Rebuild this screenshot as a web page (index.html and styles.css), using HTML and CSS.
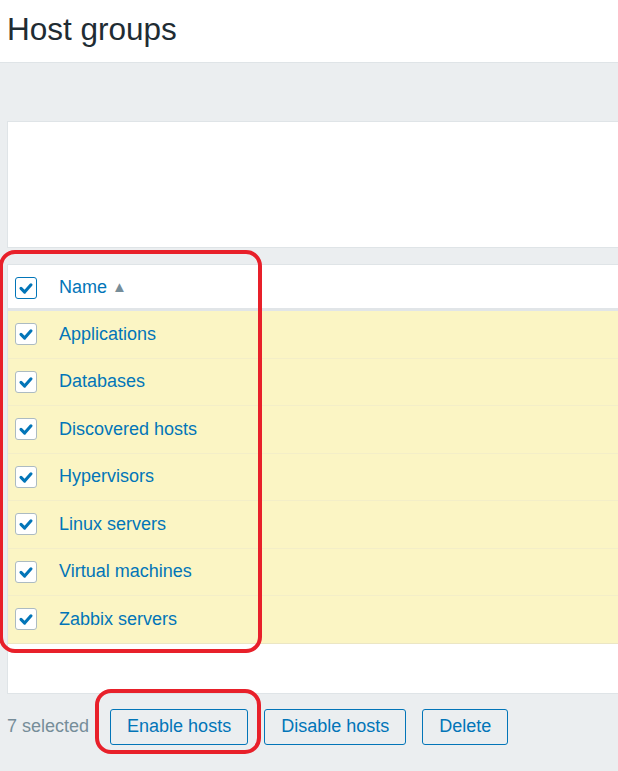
FILE: index.html
```html
<!DOCTYPE html>
<html>
<head>
<meta charset="utf-8">
<link rel="stylesheet" href="styles.css">
</head>
<body>
<header class="page-header">
  <h1 class="title">Host groups</h1>
</header>
<main class="content">
  <div class="filter-box"></div>
  <div class="list-box">
    <div class="row head">
      <span class="cb cb-head"><svg viewBox="0 0 22 22"><path d="M5.5 11.5 L9.5 15.5 L16.5 7.5" /></svg></span>
      <span class="name">Name <span class="arrow">▲</span></span>
    </div>
    <div class="row sel"><span class="cb"><svg viewBox="0 0 22 22"><path d="M5.5 11.5 L9.5 15.5 L16.5 7.5" /></svg></span><span class="name">Applications</span></div>
    <div class="row sel"><span class="cb"><svg viewBox="0 0 22 22"><path d="M5.5 11.5 L9.5 15.5 L16.5 7.5" /></svg></span><span class="name">Databases</span></div>
    <div class="row sel"><span class="cb"><svg viewBox="0 0 22 22"><path d="M5.5 11.5 L9.5 15.5 L16.5 7.5" /></svg></span><span class="name">Discovered hosts</span></div>
    <div class="row sel"><span class="cb"><svg viewBox="0 0 22 22"><path d="M5.5 11.5 L9.5 15.5 L16.5 7.5" /></svg></span><span class="name">Hypervisors</span></div>
    <div class="row sel"><span class="cb"><svg viewBox="0 0 22 22"><path d="M5.5 11.5 L9.5 15.5 L16.5 7.5" /></svg></span><span class="name">Linux servers</span></div>
    <div class="row sel"><span class="cb"><svg viewBox="0 0 22 22"><path d="M5.5 11.5 L9.5 15.5 L16.5 7.5" /></svg></span><span class="name">Virtual machines</span></div>
    <div class="row sel last"><span class="cb"><svg viewBox="0 0 22 22"><path d="M5.5 11.5 L9.5 15.5 L16.5 7.5" /></svg></span><span class="name">Zabbix servers</span></div>
    <div class="list-space"></div>
  </div>
  <div class="actions">
    <span class="count">7 selected</span>
    <button class="btn">Enable hosts</button>
    <button class="btn">Disable hosts</button>
    <button class="btn">Delete</button>
  </div>
</main>
<div class="mark mark-list"></div>
<div class="mark mark-btn"></div>
</body>
</html>
```

FILE: styles.css
```css
html, body {
  margin: 0;
  padding: 0;
}
body {
  width: 618px;
  height: 771px;
  overflow: hidden;
  position: relative;
  background: #ebeef0;
  font-family: "Liberation Sans", Arial, sans-serif;
}
.page-header {
  background: #ffffff;
  height: 62px;
  border-bottom: 1px solid #dfe4e7;
  display: flex;
  align-items: center;
  padding-left: 7px;
}
.title {
  margin: 0;
  font-weight: normal;
  font-size: 31.5px;
  color: #1f2c33;
  line-height: 1;
  position: relative;
  top: -1px;
}
.content {
  padding: 58px 0 0 7px;
}
.filter-box {
  height: 125px;
  background: #ffffff;
  border: 1px solid #dfe4e7;
  border-right: none;
}
.list-box {
  margin-top: 16px;
  background: #ffffff;
  border: 1px solid #dfe4e7;
  border-right: none;
}
.row {
  display: flex;
  align-items: center;
  height: 47px;
  padding-left: 7px;
  border-bottom: 1px solid #f3eec8;
  box-sizing: border-box;
}
.row.head {
  height: 46px;
  border-bottom: 3px solid #e1e5e8;
  padding-top: 2px;
}
.row.sel {
  background: #fbf5c4;
  height: 47.5px;
}
.row.last {
  border-bottom: 1px solid #ebe6c4;
}
.cb {
  width: 22px;
  height: 22px;
  box-sizing: border-box;
  border: 1px solid #acbbc2;
  border-radius: 3px;
  background: #ffffff;
  display: inline-flex;
  flex: none;
}
.cb-head {
  border-color: #0275b8;
}
.cb svg {
  width: 20px;
  height: 20px;
}
.cb path {
  fill: none;
  stroke: #0275b8;
  stroke-width: 3.4;
  stroke-linecap: round;
  stroke-linejoin: round;
}
.name {
  margin-left: 22px;
  font-size: 18px;
  color: #0275b8;
}
.arrow {
  color: #768d99;
  font-size: 15px;
  position: relative;
  top: -1px;
}
.list-space {
  height: 49px;
}
.actions {
  display: flex;
  align-items: center;
  height: 36px;
  margin-top: 15px;
}
.count {
  font-size: 18px;
  color: #768d99;
  margin-right: 21px;
}
.btn {
  height: 36px;
  box-sizing: border-box;
  border: 1px solid #0275b8;
  border-radius: 3px;
  background: transparent;
  color: #0275b8;
  font-family: "Liberation Sans", Arial, sans-serif;
  font-size: 18px;
  padding: 0 16px;
  margin-right: 16px;
}
.mark {
  position: absolute;
  border: 4px solid #e8202a;
  border-radius: 16px;
  box-sizing: border-box;
}
.mark-list {
  left: -1px;
  top: 250px;
  width: 263px;
  height: 403px;
}
.mark-btn {
  left: 95px;
  top: 689px;
  width: 166px;
  height: 65px;
}
```
